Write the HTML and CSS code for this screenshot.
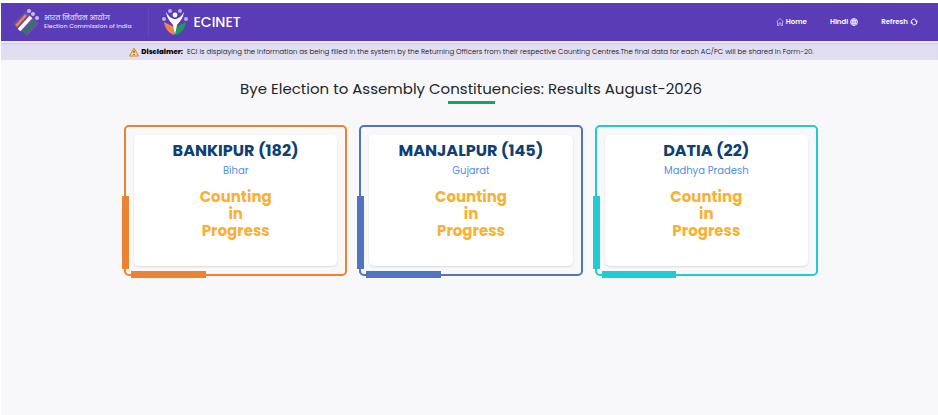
FILE: index.html
```html
<!DOCTYPE html>
<html lang="en">

<head>
    <meta charset="UTF-8">
    <meta name="viewport" content="width=device-width, initial-scale=1.0">
    <title>ECI Results</title>
    <link rel="stylesheet" href="styles.css">
</head>

<body>
    <header class="header">
        <a href="#" class="eci-logo">
            <svg width="28" height="30" viewBox="0 0 28 30" aria-hidden="true">
                <path d="M1 17 L14 4 L27 17 L15 29 Z" fill="#6a4fa8" />
                <g stroke-width="2.6">
                    <path d="M4 19 L14 8" stroke="#f08745" />
                    <path d="M7 23 L19 10" stroke="#ffffff" stroke-width="3.6" />
                    <path d="M12 26 L23 14" stroke="#178653" stroke-width="3.2" />
                </g>
                <g fill="#c9bde9">
                    <circle cx="17" cy="4" r="2" />
                    <circle cx="21" cy="7" r="2" />
                    <circle cx="25" cy="11" r="2" />
                </g>
            </svg>
            <span class="eci-name">
                <span lang="hi">भारत निर्वाचन आयोग</span>
                <span>Election Commission of India</span>
            </span>
        </a>
        <a href="#" class="ecinet-logo">
            <svg width="28" height="30" viewBox="0 0 28 30" aria-hidden="true">
                <path d="M3 15 L13 20 L13 28 C7 26 4 21 3 15 Z" fill="#f0844a" />
                <path d="M25 15 L15 20 L15 28 C21 26 24 21 25 15 Z" fill="#1b9b58" />
                <path d="M5 5 C8 10 11 12 14 12 C17 12 20 10 23 5 C22 12 18 15 16 18 L14 28 L12 18 C10 15 6 12 5 5 Z" fill="#ffffff" />
                <circle cx="14" cy="8" r="2.4" fill="#ffffff" />
                <g fill="#b9b0dc">
                    <circle cx="9" cy="4" r="2" />
                    <circle cx="19" cy="4" r="2" />
                    <circle cx="3" cy="12" r="2" />
                    <circle cx="25" cy="12" r="2" />
                </g>
            </svg>
            <span>ECINET</span>
        </a>
        <nav class="nav">
            <a href="#">
                <svg width="8" height="8" viewBox="0 0 16 16" fill="none" stroke="#d9cff5" stroke-width="1.4" aria-hidden="true">
                    <path d="M1 8 L8 1 L15 8 M3 7 V15 H6 V10 H10 V15 H13 V7" />
                </svg>
                Home
            </a>
            <a href="#">
                Hindi
                <svg width="8" height="8" viewBox="0 0 16 16" fill="none" stroke="#e6dffa" stroke-width="1.8" aria-hidden="true">
                    <circle cx="8" cy="8" r="7" />
                    <ellipse cx="8" cy="8" rx="3" ry="7" />
                    <path d="M1 8 H15 M8 1 V15 M2 5 H14 M2 11 H14" />
                </svg>
            </a>
            <button type="button">
                Refresh
                <svg width="8" height="8" viewBox="0 0 16 16" fill="none" stroke="#ffffff" stroke-width="2" aria-hidden="true">
                    <path d="M3 10 A5 5 0 0 1 12 5 M13 6 A5 5 0 0 1 4 11" />
                    <path d="M10 6 H15 M1 10 H6" />
                </svg>
            </button>
        </nav>
    </header>

    <div class="disclaimer">
        <svg width="10" height="10" viewBox="0 0 20 20" aria-hidden="true">
            <path d="M10 2 L19 18 H1 Z" fill="#fbd78d" stroke="#d9822f" stroke-width="2" stroke-linejoin="round" />
            <path d="M10 7 V12 M10 14 V16" stroke="#5a3a1a" stroke-width="2" />
        </svg>
        <strong>Disclaimer:</strong>
        <span>ECI is displaying the information as being filled in the system by the Returning Officers from their respective Counting Centres.The final data for each AC/PC will be shared in Form-20.</span>
    </div>

    <main class="main">
        <h1 class="title">Bye Election to Assembly Constituencies: Results August-2026</h1>

        <div class="cards">
            <div class="card orange">
                <div class="card-body">
                    <h2>BANKIPUR (182)</h2>
                    <h3>Bihar</h3>
                    <p>Counting<br>in<br>Progress</p>
                </div>
            </div>
            <div class="card blue">
                <div class="card-body">
                    <h2>MANJALPUR (145)</h2>
                    <h3>Gujarat</h3>
                    <p>Counting<br>in<br>Progress</p>
                </div>
            </div>
            <div class="card teal">
                <div class="card-body">
                    <h2>DATIA (22)</h2>
                    <h3>Madhya Pradesh</h3>
                    <p>Counting<br>in<br>Progress</p>
                </div>
            </div>
        </div>
    </main>
</body>

</html>
```
FILE: styles.css
```css
* {
    box-sizing: border-box;
}

html {
    background-color: #ffffff;
}

body {
    margin: 0;
    padding: 3px 0 0 1px;
    min-height: 100vh;
    display: flex;
    flex-direction: column;
    font-family: 'Poppins', 'Inter', 'Noto Sans', sans-serif;
    color: #212529;
}

.header {
    display: flex;
    align-items: center;
    height: 38px;
    padding: 0 20px 0 11px;
    background-color: #5a3db6;
    color: #ffffff;
}

.header a,
.header button {
    color: #ffffff;
    text-decoration: none;
}

.eci-logo {
    display: flex;
    align-items: center;
    gap: 4px;
    padding-right: 16px;
    border-right: 1px solid #6549bc;
}

.eci-name {
    display: flex;
    flex-direction: column;
    font-size: 6px;
    font-weight: 500;
    line-height: 9px;
    color: #e4dcf8;
}

.eci-name [lang="hi"] {
    font-size: 7px;
}

.ecinet-logo {
    display: flex;
    align-items: center;
    gap: 5px;
    margin-left: 12px;
    font-size: 14px;
    font-weight: 500;
}

.nav {
    display: flex;
    gap: 23px;
    margin-left: auto;
}

.nav a,
.nav button {
    display: flex;
    align-items: center;
    gap: 2px;
    padding: 0;
    border: 0;
    background: none;
    font-family: inherit;
    font-size: 7px;
    font-weight: 600;
    line-height: 10px;
}

.disclaimer {
    display: flex;
    justify-content: center;
    align-items: center;
    min-height: 19px;
    padding-left: 4px;
    border-top: 2px solid #ece9f6;
    background-color: #e1def1;
    box-shadow: inset 0 1px 1px #cfcbdc;
    font-size: 7px;
    font-weight: 300;
    line-height: 10px;
    color: #000000;
}

.disclaimer strong {
    margin: 0 4px 0 2px;
    font-weight: 800;
}

.main {
    flex: 1;
    padding: 18px 20px 18px 23px;
    background-color: #f8f8fb;
}

.title {
    margin: 0 0 21px;
    font-size: 15px;
    font-weight: 400;
    line-height: 22px;
    text-align: center;
}

.title::after {
    content: "";
    display: block;
    width: 47px;
    height: 3px;
    margin: 1px auto 0;
    background-color: #17a365;
}

.cards {
    display: grid;
    grid-template-columns: repeat(3, 1fr);
    gap: 12px;
    max-width: 694px;
    margin: 0 auto;
}

.card {
    position: relative;
    padding: 8px;
    border: 2px solid;
    border-radius: 5px;
}

.card::before,
.card::after {
    content: "";
    position: absolute;
    background-color: currentColor;
}

.card::before {
    left: -4px;
    bottom: 5px;
    width: 7px;
    height: 50%;
}

.card::after {
    left: 5px;
    bottom: -4px;
    width: 34%;
    height: 7px;
}

.orange {
    color: #ec8333;
}

.blue {
    color: #5273c2;
}

.teal {
    color: #20cbd3;
}

.card-body {
    min-height: 131px;
    padding: 6px;
    border-radius: 5px;
    background-color: #ffffff;
    box-shadow: 0 1px 2px rgba(0, 0, 0, 0.12);
    text-align: center;
}

.card-body h2 {
    margin: 0;
    font-size: 16px;
    font-weight: 700;
    line-height: 20px;
    color: #103f75;
}

.card-body h3 {
    margin: 3px 0 10px;
    font-size: 10px;
    font-weight: 400;
    line-height: 14px;
    color: #4f8fec;
}

.card-body p {
    margin: 0;
    font-size: 15px;
    font-weight: 700;
    line-height: 17px;
    color: #f8b133;
}
```
